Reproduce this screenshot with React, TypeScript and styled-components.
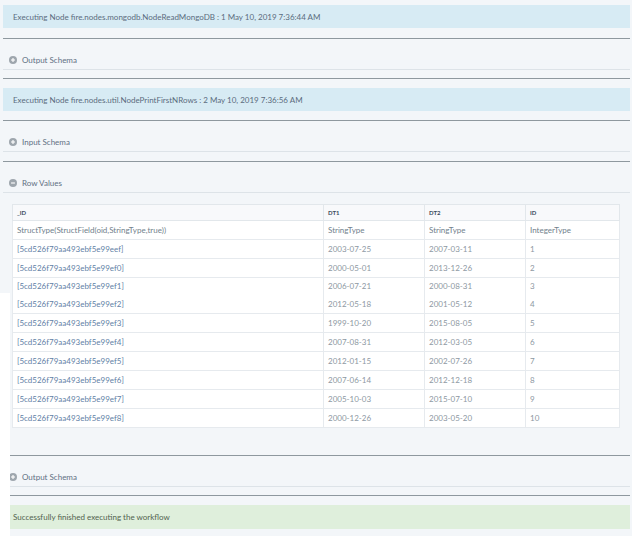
import styled, { createGlobalStyle } from 'styled-components';

const GlobalStyle = createGlobalStyle`
  html, body {
    margin: 0;
    padding: 0;
    background: #ffffff;
  }
  body {
    font-family: Lato, 'Open Sans', sans-serif;
  }
`;

type Row = { id: string; dt1: string; dt2: string; n: string; joined?: boolean };

const rows: Row[] = [
  { id: '[5cd526f79aa493ebf5e99eef]', dt1: '2003-07-25', dt2: '2007-03-11', n: '1' },
  { id: '[5cd526f79aa493ebf5e99ef0]', dt1: '2000-05-01', dt2: '2013-12-26', n: '2' },
  { id: '[5cd526f79aa493ebf5e99ef1]', dt1: '2006-07-21', dt2: '2000-08-31', n: '3', joined: true },
  { id: '[5cd526f79aa493ebf5e99ef2]', dt1: '2012-05-18', dt2: '2001-05-12', n: '4' },
  { id: '[5cd526f79aa493ebf5e99ef3]', dt1: '1999-10-20', dt2: '2015-08-05', n: '5' },
  { id: '[5cd526f79aa493ebf5e99ef4]', dt1: '2007-08-31', dt2: '2012-03-05', n: '6' },
  { id: '[5cd526f79aa493ebf5e99ef5]', dt1: '2012-01-15', dt2: '2002-07-26', n: '7' },
  { id: '[5cd526f79aa493ebf5e99ef6]', dt1: '2007-06-14', dt2: '2012-12-18', n: '8' },
  { id: '[5cd526f79aa493ebf5e99ef7]', dt1: '2005-10-03', dt2: '2015-07-10', n: '9' },
  { id: '[5cd526f79aa493ebf5e99ef8]', dt1: '2000-12-26', dt2: '2003-05-20', n: '10' },
];

function ToggleIcon({ open }: { open?: boolean }) {
  return (
    <Icon viewBox='0 0 10 10'>
      <circle cx='5' cy='5' r='5' fill='#9ea6ad' />
      <path d='M2.6 5h4.8' stroke='#fff' strokeWidth='1.4' />
      {!open && <path d='M5 2.6v4.8' stroke='#fff' strokeWidth='1.4' />}
    </Icon>
  );
}

function Section({ title, open }: { title: string; open?: boolean }) {
  return (
    <SectionHead>
      <ToggleIcon open={open} />
      <span>{title}</span>
    </SectionHead>
  );
}

export default function App() {
  return (
    <>
      <GlobalStyle />
      <Page>
        <Banner>Executing Node fire.nodes.mongodb.NodeReadMongoDB : 1 May 10, 2019 7:36:44 AM</Banner>
        <Rule $top={10} />
        <Section title='Output Schema' />
        <Rule $top={8} />

        <Banner $top={9}>Executing Node fire.nodes.util.NodePrintFirstNRows : 2 May 10, 2019 7:36:56 AM</Banner>
        <Rule $top={9} />
        <Section title='Input Schema' />
        <Rule $top={9} />
        <Section title='Row Values' open />

        <TableWrap>
          <Table>
            <thead>
              <tr>
                <Th $w={302}>_ID</Th>
                <Th $w={92}>DT1</Th>
                <Th $w={92}>DT2</Th>
                <Th>ID</Th>
              </tr>
            </thead>
            <tbody>
              <Tr>
                <Td $tone='type'>StructType(StructField(oid,StringType,true))</Td>
                <Td $tone='type'>StringType</Td>
                <Td $tone='type'>StringType</Td>
                <Td $tone='type'>IntegerType</Td>
              </Tr>
              {rows.map((r) => (
                <Tr key={r.id} $joined={r.joined}>
                  <Td $tone='link'>{r.id}</Td>
                  <Td>{r.dt1}</Td>
                  <Td>{r.dt2}</Td>
                  <Td>{r.n}</Td>
                </Tr>
              ))}
            </tbody>
          </Table>
        </TableWrap>

        <Rule $top={27} />
        <Section title='Output Schema' />
        <Rule $top={8} />
        <Banner $top={9} $tone='success'>Successfully finished executing the workflow</Banner>
        <EdgeMask />
      </Page>
    </>
  );
}

const Page = styled.div`
  position: relative;
  width: 632px;
  min-height: 536px;
  box-sizing: border-box;
  padding: 5px 2px 6px 3px;
  background: #f3f6f9;
  display: flex;
  flex-direction: column;
`;

const Banner = styled.div<{ $top?: number; $tone?: 'info' | 'success' }>`
  margin-top: ${(p) => p.$top ?? 0}px;
  height: ${(p) => (p.$tone === 'success' ? 24 : 23)}px;
  display: flex;
  align-items: center;
  padding-left: 10px;
  font-size: 8px;
  color: ${(p) => (p.$tone === 'success' ? '#52634f' : '#5b6c7e')};
  background: ${(p) => (p.$tone === 'success' ? '#dfefdc' : '#d7ebf4')};
  white-space: nowrap;
`;

const Rule = styled.div<{ $top: number }>`
  margin-top: ${(p) => p.$top}px;
  height: 1px;
  background: #8e989f;
`;

const SectionHead = styled.div`
  display: flex;
  align-items: center;
  gap: 5px;
  height: 12px;
  padding: 15px 0 3px 6px;
  border-bottom: 1px solid #dde3e8;
  font-size: 8px;
  color: #5f7083;
`;

const Icon = styled.svg`
  width: 8px;
  height: 8px;
  flex: none;
`;

const TableWrap = styled.div`
  margin-top: 11px;
  padding: 0 9px;
`;

const Table = styled.table`
  width: 608px;
  border-collapse: collapse;
  table-layout: fixed;
  background: #ffffff;
  border: 1px solid #e2e7eb;
`;

const Th = styled.th<{ $w?: number }>`
  width: ${(p) => (p.$w ? `${p.$w}px` : 'auto')};
  height: 15px;
  padding: 0 4px;
  text-align: left;
  font-size: 6px;
  font-weight: 700;
  color: #3a4b5c;
  background: #f8f9fb;
  border: 1px solid #e2e7eb;
`;

const Tr = styled.tr<{ $joined?: boolean }>`
  height: ${(p) => (p.$joined ? 17 : 19)}px;
  & > td {
    border-bottom: ${(p) => (p.$joined ? 'none' : '1px solid #e6eaee')};
  }
`;

const Td = styled.td<{ $tone?: 'type' | 'link' }>`
  padding: 0 4px;
  font-size: 8px;
  white-space: nowrap;
  color: ${(p) => (p.$tone === 'link' ? '#5f7fa6' : p.$tone === 'type' ? '#717f8c' : '#8d98a2')};
  border-left: 1px solid #e6eaee;
  border-right: 1px solid #e6eaee;
`;

const EdgeMask = styled.div`
  position: absolute;
  left: 0;
  top: 293px;
  bottom: 0;
  width: 10px;
  background: #ffffff;
`;
